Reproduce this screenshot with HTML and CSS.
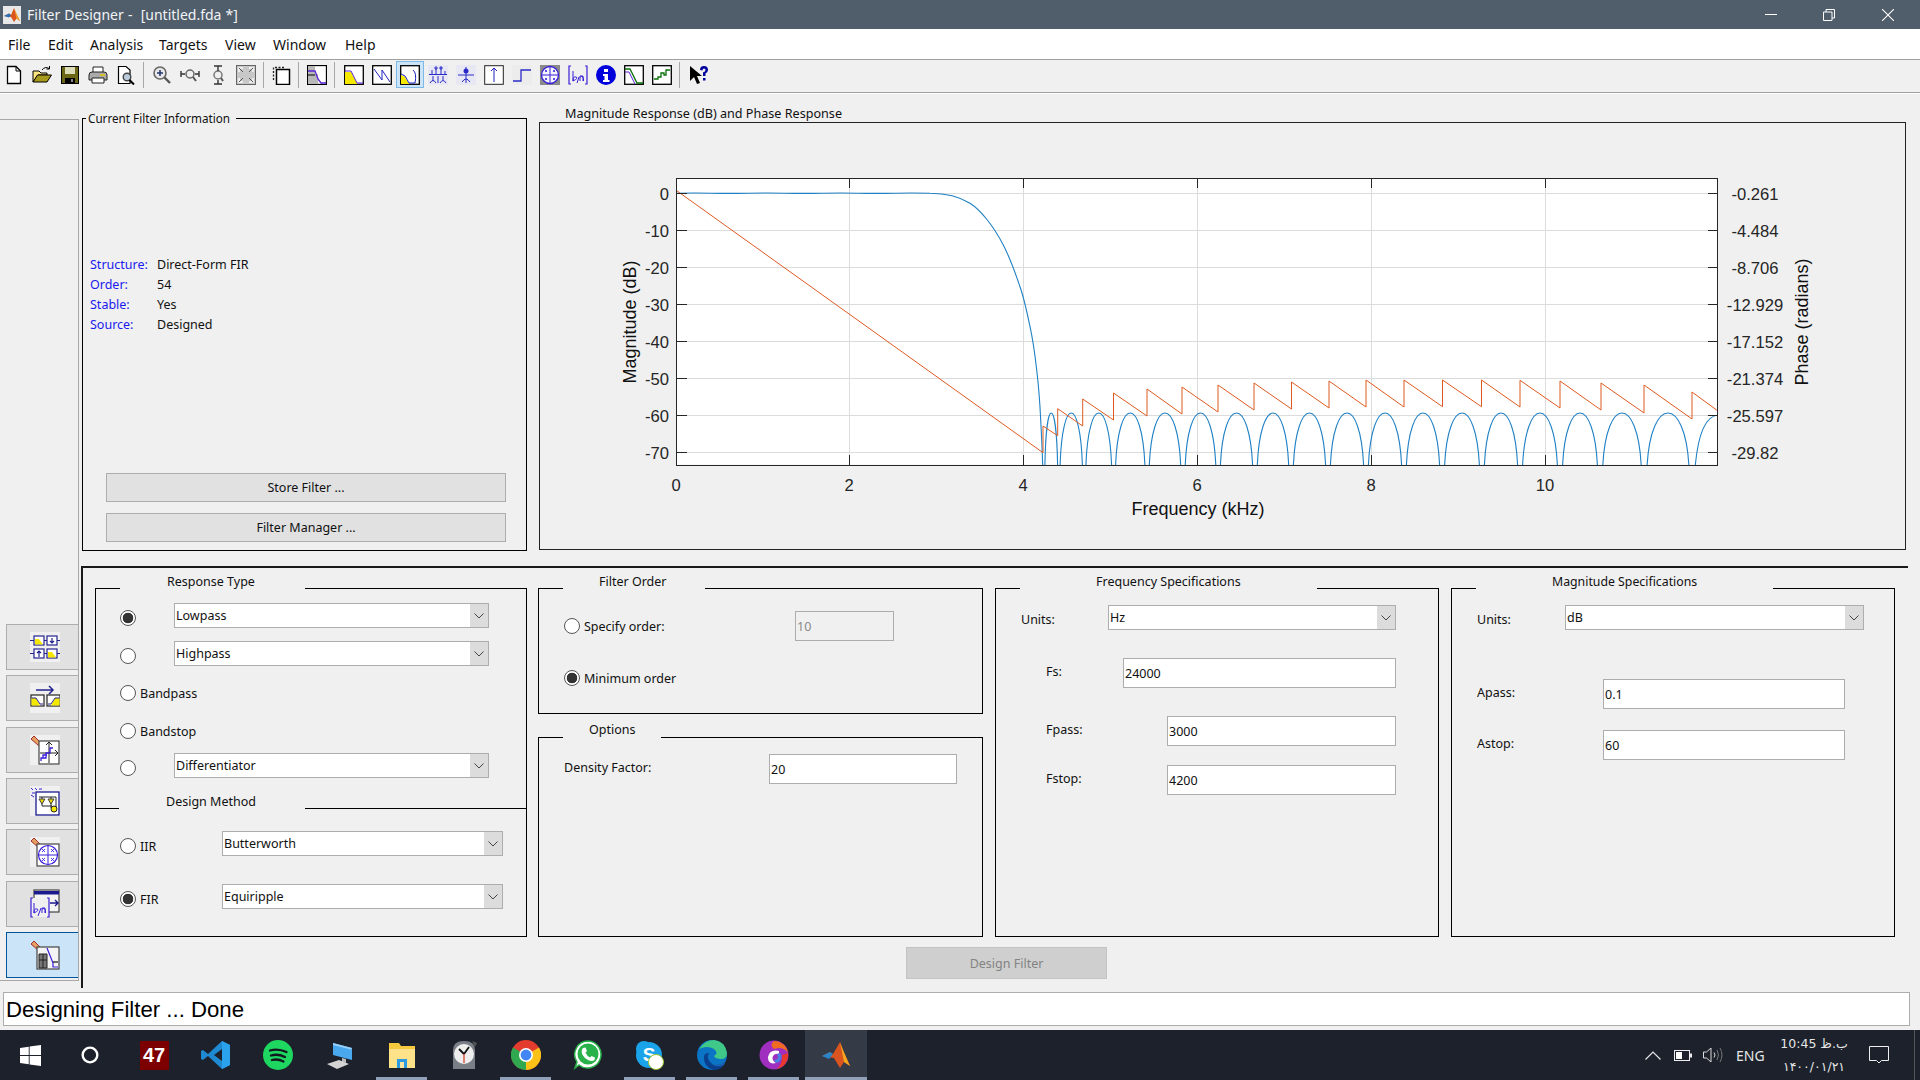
FILE: index.html
```html
<!DOCTYPE html>
<html lang="en">
<head>
<meta charset="utf-8">
<title>Filter Designer - [untitled.fda *]</title>
<link rel="stylesheet" href="styles.css">
</head>
<body>
<div class="app">
  <header class="titlebar">
    <svg class="title-icon" viewBox="0 0 18 18"><rect width="18" height="18" fill="#e8e8e8"/><path d="M1 10L6 7.5 8 9 11 2 13 7 17 15 13.500 12.500 11 16 8 11Z" fill="#d9541e"/><path d="M1 10L6 7.500 8 9 6 11.500Z" fill="#2a6fb5"/><path d="M11 2L13 7 17 15 13.500 12.500Z" fill="#f0a020"/></svg>
    <span class="title-text">Filter Designer -  [untitled.fda *]</span>
    <div class="win-controls">
      <svg viewBox="0 0 12 12"><path d="M0 5.500H12" stroke="#fff"/></svg>
      <svg viewBox="0 0 12 12"><path d="M0.500 3H9V11.500H0.500Z M3 3V0.500H11.500V9H9" fill="none" stroke="#fff"/></svg>
      <svg viewBox="0 0 12 12"><path d="M0 0L12 12M12 0L0 12" stroke="#fff" stroke-width="1.100"/></svg>
    </div>
  </header>

  <nav class="menubar">
    <span>File</span><span>Edit</span><span>Analysis</span><span>Targets</span><span>View</span><span>Window</span><span>Help</span>
  </nav>

  <div class="toolbar">
    <span class="tb"><svg viewBox="0 0 20 20"><path d="M3.500 1.500H12L16.500 6V18.500H3.500Z" fill="#fff" stroke="#000" stroke-width="1.300"/><path d="M12 1.500V6H16.500" fill="none" stroke="#000"/></svg></span>
    <span class="tb"><svg viewBox="0 0 20 20"><path d="M1 17V6H7L9 8H15V10H6L1 17Z" fill="#ffe680" stroke="#000"/><path d="M1 17L5.500 10H19.500L15 17Z" fill="#a89a1d" stroke="#000"/><path d="M10 5Q13 1 17 3.500M17.500 1V4H14.500" fill="none" stroke="#000"/></svg></span>
    <span class="tb"><svg viewBox="0 0 20 20"><rect x="1.500" y="1.500" width="17" height="17" fill="#6b6716" stroke="#000"/><rect x="5" y="2" width="10" height="7" fill="#dcdcb8"/><rect x="5" y="13" width="10" height="5" fill="#000"/><rect x="11" y="14" width="2" height="3" fill="#888"/></svg></span>
    <span class="tb"><svg viewBox="0 0 20 20"><path d="M5 8V2H15V8Z" fill="#fff" stroke="#222"/><path d="M1 10Q1 7 4 7H16Q19 7 19 10V15H1Z" fill="#aaa" stroke="#222"/><path d="M4 13V18H16V13Z" fill="#fff" stroke="#222"/><path d="M12 10H17" stroke="#e4c400" stroke-width="1.500"/></svg></span>
    <span class="tb"><svg viewBox="0 0 20 20"><path d="M2.500 1.500H10L14 5V18.500H2.500Z" fill="#fff" stroke="#000" stroke-width="1.200"/><circle cx="11" cy="12" r="3.800" fill="#bcd" stroke="#444" stroke-width="1.400"/><path d="M13.500 15L18 19.500" stroke="#000" stroke-width="2"/></svg></span>
    <span class="sep"></span>
    <span class="tb"><svg viewBox="0 0 20 20"><circle cx="8" cy="8" r="6" fill="#e8e8e8" stroke="#666" stroke-width="1.600"/><path d="M5 8H11M8 5V11" stroke="#24336b" stroke-width="1.500"/><path d="M12.500 12.500L18 18" stroke="#555" stroke-width="2.400"/></svg></span>
    <span class="tb"><svg viewBox="0 0 20 20"><circle cx="10" cy="9" r="4" fill="#eee" stroke="#666" stroke-width="1.500"/><path d="M13 12L16 16" stroke="#555" stroke-width="2"/><path d="M1 6V12M1 9H5M19 6V12M19 9H15" stroke="#333" stroke-width="1.400"/></svg></span>
    <span class="tb"><svg viewBox="0 0 20 20"><circle cx="10" cy="10" r="4" fill="#eee" stroke="#777" stroke-width="1.500"/><path d="M13 13L15 16" stroke="#555" stroke-width="2"/><path d="M6 1H14M10 1V6M6 19H14M10 19V15" stroke="#333" stroke-width="1.400"/></svg></span>
    <span class="tb"><svg viewBox="0 0 20 20"><rect x="0.500" y="0.500" width="19" height="19" fill="#c8c8c8" stroke="#666"/><path d="M3 7V3H7M17 7V3H13M3 13V17H7M17 13V17H13" fill="none" stroke="#fafafa" stroke-width="1.500"/><path d="M3 3L7 7M17 3L13 7M3 17L7 13M17 17L13 13" stroke="#555"/></svg></span>
    <span class="sep sep-n"></span>
    <span class="tb"><svg viewBox="0 0 20 20"><path d="M2.500 15V2.500H13" fill="none" stroke="#222" stroke-dasharray="2 1.500" stroke-width="1.300"/><rect x="5.500" y="4.500" width="13" height="15" fill="#fff" stroke="#000" stroke-width="1.500"/></svg></span>
    <span class="sep"></span>
    <span class="tb"><svg viewBox="0 0 20 20"><rect x="0.500" y="0.500" width="19" height="19" fill="#fff" stroke="#000" stroke-width="1.300"/><path d="M1 1H8V9H11V19H1Z" fill="#b8b8b8"/><path d="M1 6H8L11 14L14 18H19" fill="none" stroke="#5a20d8" stroke-width="1.300"/><path d="M1 10H8" stroke="#000"/></svg></span>
    <span class="sep sep-w"></span>
    <span class="tb"><svg viewBox="0 0 20 20"><rect x="0.700" y="0.700" width="18.600" height="18.600" fill="#fff" stroke="#000" stroke-width="1.300"/><path d="M1 7H7L13 18V19H1Z" fill="#f4e800"/><path d="M1 6H7L13 18H19" fill="none" stroke="#5a20d8"/></svg></span>
    <span class="tb"><svg viewBox="0 0 20 20"><rect x="0.700" y="0.700" width="18.600" height="18.600" fill="#fff" stroke="#000" stroke-width="1.300"/><path d="M2 4L10 15V5L18 17" fill="none" stroke="#2020c0"/></svg></span>
    <span class="tb active"><svg viewBox="0 0 20 20"><rect x="0.700" y="0.700" width="18.600" height="18.600" fill="#fff" stroke="#000" stroke-width="1.300"/><path d="M1 10L5 12L9 19H1Z" fill="#f4e800"/><path d="M1 9L5 11L9 18H15Q17 8 13 5" fill="none" stroke="#2020c0"/></svg></span>
    <span class="tb"><svg viewBox="0 0 20 20"><rect width="20" height="20" fill="#e8e8f4"/><path d="M1 9.500H19M4 9V5M8 9V3M13 9V2M17 9V6M5 11V16M10 11V18M15 11V15" stroke="#2a2ac8"/><circle cx="8" cy="3" r="1.200" fill="none" stroke="#2a2ac8"/><circle cx="13" cy="3" r="1.200" fill="none" stroke="#2a2ac8"/><path d="M2 18Q5 13 8 18M12 18Q15 13 18 18" fill="none" stroke="#2a2ac8"/></svg></span>
    <span class="tb"><svg viewBox="0 0 20 20"><rect width="20" height="20" fill="#e8e8f4"/><path d="M2 10H18M10 2V18" stroke="#2a2ac8"/><circle cx="10" cy="6" r="2.500" fill="#2a2ac8"/><path d="M6 17Q10 11 14 17" fill="none" stroke="#2a2ac8"/></svg></span>
    <span class="tb"><svg viewBox="0 0 20 20"><rect x="0.700" y="0.700" width="18.600" height="18.600" fill="#fff" stroke="#222"/><path d="M10 17V3M7 6L10 3L13 6" fill="none" stroke="#2020c0"/></svg></span>
    <span class="tb"><svg viewBox="0 0 20 20"><rect width="20" height="20" fill="#ececec"/><path d="M1 16H9V5H19" fill="none" stroke="#2a2ac8" stroke-width="1.300"/></svg></span>
    <span class="tb"><svg viewBox="0 0 20 20"><rect width="20" height="20" fill="#8a8a8a"/><circle cx="10" cy="10" r="8.500" fill="#f4f4ff" stroke="#3a20d8" stroke-width="1.300"/><path d="M1.500 10H18.500M10 1.500V18.500" stroke="#3a20d8"/><path d="M5 5L7 7M7 5L5 7M13 13L15 15M15 13L13 15M13 5L15 7M15 5L13 7M5 13L7 15M7 13L5 15" stroke="#3a20d8" stroke-width=".8"/></svg></span>
    <span class="tb"><svg viewBox="0 0 20 20"><path d="M3 1H1V19H3M17 1H19V19H17" fill="none" stroke="#3a20d8" stroke-width="1.200"/><path d="M5 6V16M5 16Q5 11 8 12T5 16M12 16V11H15V16M12 12Q16 10 15.500 16" fill="none" stroke="#3a20d8"/><path d="M9 18L11 12" stroke="#3a20d8"/></svg></span>
    <span class="tb"><svg viewBox="0 0 20 20"><circle cx="10" cy="10" r="10" fill="#0000dd"/><rect x="8" y="4" width="4" height="3" fill="#fff"/><path d="M7 9H12V15H13.500V17H7V15H8.500V11H7Z" fill="#fff"/></svg></span>
    <span class="tb"><svg viewBox="0 0 20 20"><rect x="0.700" y="0.700" width="18.600" height="18.600" fill="#fff" stroke="#000" stroke-width="1.300"/><path d="M1 4H6L13 18H19" fill="none" stroke="#087008" stroke-width="1.300"/><path d="M1 7H5L11 19" fill="none" stroke="#5a20d8"/></svg></span>
    <span class="tb"><svg viewBox="0 0 20 20"><rect x="0.700" y="0.700" width="18.600" height="18.600" fill="#fff" stroke="#000" stroke-width="1.300"/><path d="M2 14H6V12H9V8H12V10H14V5H18" fill="none" stroke="#087008" stroke-width="1.300"/></svg></span>
    <span class="sep sep-w"></span>
    <span class="tb"><svg viewBox="0 0 20 20"><path d="M1 1V16L5 12L8 19L11 18L8 11H13Z" fill="#000"/><path d="M11 5Q11 1 15 1Q19 1 19 5Q19 7 16.500 8.500V11H14V7.500Q16.500 6.500 16.500 5Q16.500 3.500 15 3.500Q13.500 3.500 13.500 5.500Z" fill="#0000a0"/><rect x="14" y="13" width="2.500" height="2.500" fill="#0000a0"/></svg></span>
  </div>

  <div class="workspace">
    <aside class="sidebar">
      <button class="side-btn"><svg viewBox="0 0 30 30"><rect width="30" height="30" fill="#f0f0f0"/><g fill="#fff" stroke="#23238e" stroke-width="1.200"><rect x="4" y="4" width="10" height="9"/><rect x="17" y="4" width="10" height="9"/><rect x="4" y="17" width="10" height="9"/><rect x="17" y="17" width="10" height="9"/></g><path d="M5 7L9 7L13 12.500H5ZM18 20L22 20L26 25.500H18Z" fill="#f4e800"/><path d="M22 6V11M20 9L22 11L24 9M9 25V19M7 21L9 19L11 21M0 8.500H4M14 8.500H17M27 8.500H30M0 21.500H4M14 21.500H17M27 21.500H30" fill="none" stroke="#23238e" stroke-width="1.200"/></svg></button>
      <button class="side-btn"><svg viewBox="0 0 30 30"><rect width="30" height="30" fill="#f0f0f0"/><path d="M6 7H22M19 3L23 7L19 11" fill="none" stroke="#23238e" stroke-width="1.500"/><rect x="1" y="12" width="13" height="11" fill="#fff" stroke="#222" stroke-width="1.200"/><rect x="17" y="12" width="13" height="11" fill="#fff" stroke="#222" stroke-width="1.200"/><path d="M1.500 15H6L10 22.500H1.500ZM29.500 15H25L21 22.500H29.500Z" fill="#f4e800"/><path d="M1.500 15H6L10 21H13M29.500 15H25L21 21H18" fill="none" stroke="#23238e"/></svg></button>
      <button class="side-btn"><svg viewBox="0 0 30 30"><rect width="30" height="30" fill="#f0f0f0"/><path d="M1 4L4 1L11 8L13 12L8.500 10.500Z" fill="#e8a060" stroke="#a03030"/><rect x="9" y="6" width="20" height="23" fill="#fff" stroke="#444" stroke-width="1.200"/><path d="M10 18H28M19 7V28" stroke="#222"/><path d="M16 10L19 7L22 10M25 15L28 18L25 21" fill="none" stroke="#222"/><path d="M11 26V23H16V18H20V13H23M13 23V20H17" fill="none" stroke="#3a20d8" stroke-width="1.300"/></svg></button>
      <button class="side-btn"><svg viewBox="0 0 30 30"><rect width="30" height="30" fill="#f0f0f0"/><path d="M1 2L3 4M5 2L7 4M9 3H12M2 7H5M1 9L4 11" stroke="#3a20d8" fill="none"/><rect x="6" y="6" width="23" height="23" fill="#fff" stroke="#1a1a8e" stroke-width="1.300"/><path d="M9 11H26V22M12 11V20H22M21 11V22" fill="none" stroke="#222"/><path d="M9 13H15L12 18ZM18 13H24L21 18Z" fill="#e8d800" stroke="#444"/><circle cx="24" cy="23" r="3" fill="#f4e800" stroke="#222"/></svg></button>
      <button class="side-btn"><svg viewBox="0 0 30 30"><rect width="30" height="30" fill="#f0f0f0"/><path d="M1 4L4 1L11 8L13 12L8.500 10.500Z" fill="#e8a060" stroke="#a03030"/><rect x="7" y="7" width="22" height="22" fill="#fff" stroke="#444" stroke-width="1.200"/><circle cx="18" cy="18" r="9.500" fill="none" stroke="#3a20d8" stroke-width="1.200"/><path d="M8 18H28M18 8V28" stroke="#3a20d8"/><path d="M12 12L15 15M15 12L12 15M21 12L24 15M24 12L21 15M12 21L15 24M15 21L12 24M21 21L24 24M24 21L21 24" stroke="#3a20d8" stroke-width=".9"/></svg></button>
      <button class="side-btn"><svg viewBox="0 0 30 30"><rect x="4" y="1" width="25" height="22" fill="#f4f4f4" stroke="#444" stroke-width="1.200"/><rect x="4" y="2" width="25" height="3.500" fill="#1a1a8e"/><path d="M20 14H28M25 11L28 14L25 17" fill="none" stroke="#1a1a8e" stroke-width="1.400"/><rect x="1" y="9" width="18" height="19" fill="#f0f0f0"/><path d="M3 9H1V28H3M17 9H19V28H17" fill="none" stroke="#3a20d8" stroke-width="1.200"/><path d="M4 14V24M4 24Q4 19 7 20T4 24M12 24V19H15V24M12 20Q16 18 15.500 24M8 27L11 19" fill="none" stroke="#3a20d8"/></svg></button>
      <button class="side-btn active"><svg viewBox="0 0 30 30"><path d="M1 4L4 1L11 8L13 12L8.500 10.500Z" fill="#e8a060" stroke="#a03030"/><rect x="7" y="7" width="22" height="22" fill="#f4f4f4" stroke="#444" stroke-width="1.200"/><path d="M9 14H17V28H9Z" fill="#777" stroke="#222"/><path d="M9 20H17M13 14V28" stroke="#222"/><path d="M17 8L23 23V27H28" fill="none" stroke="#3a20d8" stroke-width="1.200"/><path d="M23 22H28" stroke="#222" stroke-width="1.300"/></svg></button>
    </aside>

    <main class="content">
      <section class="top-row">
        <div class="group info-panel">
          <span class="legend legend-info">Current Filter Information</span>
          <dl class="info-list">
            <div><dt>Structure:</dt><dd>Direct-Form FIR</dd></div>
            <div><dt>Order:</dt><dd>54</dd></div>
            <div><dt>Stable:</dt><dd>Yes</dd></div>
            <div><dt>Source:</dt><dd>Designed</dd></div>
          </dl>
          <div class="info-actions">
            <button class="btn">Store Filter ...</button>
            <button class="btn">Filter Manager ...</button>
          </div>
        </div>

        <div class="group plot-panel">
          <span class="legend legend-plot">Magnitude Response (dB) and Phase Response</span>
          <svg class="plot" viewBox="540 123 1365 425">
            <defs><clipPath id="axes-clip"><rect x="677" y="178" width="1041" height="287"/></clipPath></defs>
            <rect x="676.500" y="178.500" width="1041" height="286" fill="#fff"/>
            <path class="grid" d="M849.500 178V465M1023.500 178V465M1197.500 178V465M1371.500 178V465M1545.500 178V465M677 193.500H1718M677 230.500H1718M677 267.500H1718M677 304.500H1718M677 341.500H1718M677 378.500H1718M677 415.500H1718M677 452.500H1718"/>
            <g clip-path="url(#axes-clip)">
              <path class="curve-mag" d="M677 193.200Q695 192.800 712 193.200T748 193.200T785 193.200T822 193.200T858 193.200T895 193.200T930 193.300C945 193.400 960 197 970 203.300C980 209.600 993 225 1003.300 245C1011 260 1016 275 1020 286.700C1024 298 1027 312 1030 326.700C1033 340 1035 355 1036.700 370C1038.500 385 1040 405 1040.700 420C1041.500 435 1042.200 450 1042.700 465M1044.900 465C1046.200 395.700 1056.300 395.700 1057.600 465M1060.100 465C1062.300 395.700 1080.200 395.700 1082.400 465M1085.900 465C1088.500 395.700 1109 395.700 1111.600 465M1115.600 465C1118.500 395.700 1142 395.700 1144.900 465M1149.300 465C1152.400 395.700 1177.600 395.700 1180.700 465M1185.200 465C1188.300 395.700 1212.700 395.700 1215.800 465M1220.400 465C1223.600 395.700 1249.400 395.700 1252.600 465M1257.300 465C1260.400 395.700 1285.600 395.700 1288.700 465M1293.400 465C1296.600 395.700 1322.400 395.700 1325.600 465M1330.400 465C1333.700 395.700 1360.300 395.700 1363.600 465M1368.400 465C1371.700 395.700 1398.300 395.700 1401.600 465M1406.400 465C1409.700 395.700 1436.300 395.700 1439.600 465M1444.600 465C1448.100 395.700 1475.900 395.700 1479.400 465M1484.400 465C1487.700 395.700 1514.300 395.700 1517.600 465M1522.600 465C1526.100 395.700 1553.900 395.700 1557.400 465M1562.600 465C1566.100 395.700 1593.900 395.700 1597.400 465M1602.800 465C1606.600 395.700 1637.400 395.700 1641.200 465M1647.100 465C1651.300 395.700 1684.700 395.700 1688.900 465M1695.300 465C1698.500 432 1706 416 1718 415"/>
              <path class="curve-phase" d="M676.700 190.700L1043 452.700V426L1057.700 435.700V408.700L1082.700 426V399L1113.500 420V393L1147 416V389L1182 414V387L1218 412V385L1254 410V383L1291.500 409V382L1329 408V381L1366 407V380L1404 407V380L1442.500 406.700V380L1481.500 406.700V380L1520 407V380.300L1560 408V381L1601 410V383L1644 413V385L1692 419V392L1718 411"/>
            </g>
            <path class="ticks" d="M849.500 178V188M1023.500 178V188M1197.500 178V188M1371.500 178V188M1545.500 178V188M849.500 465V455M1023.500 465V455M1197.500 465V455M1371.500 465V455M1545.500 465V455M677 193.500H687M677 230.500H687M677 267.500H687M677 304.500H687M677 341.500H687M677 378.500H687M677 415.500H687M677 452.500H687M1718 193.500H1708M1718 230.500H1708M1718 267.500H1708M1718 304.500H1708M1718 341.500H1708M1718 378.500H1708M1718 415.500H1708M1718 452.500H1708"/>
            <rect class="axes-box" x="676.500" y="178.500" width="1041" height="287"/>
            <g class="tick-y">
              <text x="669" y="200">0</text><text x="669" y="237">-10</text><text x="669" y="274">-20</text><text x="669" y="311">-30</text><text x="669" y="348">-40</text><text x="669" y="385">-50</text><text x="669" y="422">-60</text><text x="669" y="459">-70</text>
            </g>
            <g class="tick-x">
              <text x="676" y="491">0</text><text x="849" y="491">2</text><text x="1023" y="491">4</text><text x="1197" y="491">6</text><text x="1371" y="491">8</text><text x="1545" y="491">10</text>
            </g>
            <g class="tick-x">
              <text x="1755" y="200">-0.261</text><text x="1755" y="237">-4.484</text><text x="1755" y="274">-8.706</text><text x="1755" y="311">-12.929</text><text x="1755" y="348">-17.152</text><text x="1755" y="385">-21.374</text><text x="1755" y="422">-25.597</text><text x="1755" y="459">-29.82</text>
            </g>
            <text class="axis-title" x="1198" y="515">Frequency (kHz)</text>
            <text class="axis-title" transform="translate(636 322) rotate(-90)">Magnitude (dB)</text>
            <text class="axis-title" transform="translate(1808 322) rotate(-90)">Phase (radians)</text>
          </svg>
        </div>
      </section>

      <section class="design-block">
        <div class="design-grid">
          <div class="group response-panel">
            <span class="legend legend-response">Response Type</span>
            <div class="response-rows">
              <label class="opt-row r1"><input class="radio nudge" type="radio" name="resp" checked><span class="select s315"><span>Lowpass</span><i class="arrow"><svg viewBox="0 0 10 6"><path d="M0.500 0.500L5 5L9.500 0.500" fill="none" stroke="#444"/></svg></i></span></label>
              <label class="opt-row r2"><input class="radio nudge" type="radio" name="resp"><span class="select s315"><span>Highpass</span><i class="arrow"><svg viewBox="0 0 10 6"><path d="M0.500 0.500L5 5L9.500 0.500" fill="none" stroke="#444"/></svg></i></span></label>
              <label class="opt-row r3"><input class="radio" type="radio" name="resp"><span class="opt-label">Bandpass</span></label>
              <label class="opt-row r4"><input class="radio" type="radio" name="resp"><span class="opt-label">Bandstop</span></label>
              <label class="opt-row r5"><input class="radio nudge" type="radio" name="resp"><span class="select s315"><span>Differentiator</span><i class="arrow"><svg viewBox="0 0 10 6"><path d="M0.500 0.500L5 5L9.500 0.500" fill="none" stroke="#444"/></svg></i></span></label>
            </div>
            <div class="method">
              <span class="legend legend-method">Design Method</span>
              <label class="opt-row"><input class="radio nudge" type="radio" name="method"><span class="opt-label method-label nudge">IIR</span><span class="select s281"><span>Butterworth</span><i class="arrow"><svg viewBox="0 0 10 6"><path d="M0.500 0.500L5 5L9.500 0.500" fill="none" stroke="#444"/></svg></i></span></label>
              <label class="opt-row m2"><input class="radio nudge" type="radio" name="method" checked><span class="opt-label method-label nudge">FIR</span><span class="select s281"><span>Equiripple</span><i class="arrow"><svg viewBox="0 0 10 6"><path d="M0.500 0.500L5 5L9.500 0.500" fill="none" stroke="#444"/></svg></i></span></label>
            </div>
          </div>

          <div class="middle-col">
            <div class="group order-panel">
              <span class="legend legend-order">Filter Order</span>
              <label class="opt-row order-row"><input class="radio" type="radio" name="order"><span class="opt-label order-label">Specify order:</span><input class="field f99" type="text" value="10" disabled></label>
              <label class="opt-row order-row o2"><input class="radio" type="radio" name="order" checked><span class="opt-label order-label">Minimum order</span></label>
            </div>
            <div class="group options-panel">
              <span class="legend legend-options">Options</span>
              <div class="density-row"><span class="lift">Density Factor:</span><input class="field f188" type="text" value="20"></div>
            </div>
          </div>

          <div class="group spec-panel freq-panel">
            <span class="legend legend-freq">Frequency Specifications</span>
            <div class="spec-row"><span class="drop">Units:</span><span class="select s288"><span>Hz</span><i class="arrow"><svg viewBox="0 0 10 6"><path d="M0.500 0.500L5 5L9.500 0.500" fill="none" stroke="#444"/></svg></i></span></div>
            <div class="spec-row sr-fs"><span class="indent lift">Fs:</span><input class="field f273" type="text" value="24000"></div>
            <div class="spec-row sr-fs"><span class="indent lift">Fpass:</span><input class="field f229" type="text" value="3000"></div>
            <div class="spec-row sr-stop"><span class="indent lift">Fstop:</span><input class="field f229" type="text" value="4200"></div>
          </div>

          <div class="group spec-panel mag-panel">
            <span class="legend legend-mag">Magnitude Specifications</span>
            <div class="spec-row"><span class="drop">Units:</span><span class="select s299"><span>dB</span><i class="arrow"><svg viewBox="0 0 10 6"><path d="M0.500 0.500L5 5L9.500 0.500" fill="none" stroke="#444"/></svg></i></span></div>
            <div class="spec-row sr-apass"><span class="lift">Apass:</span><input class="field f242" type="text" value="0.1"></div>
            <div class="spec-row sr-astop"><span class="lift">Astop:</span><input class="field f242" type="text" value="60"></div>
          </div>
        </div>
        <button class="btn design-btn" disabled>Design Filter</button>
      </section>
    </main>
  </div>

  <div class="status">Designing Filter ... Done</div>

  <footer class="taskbar">
    <span class="task start"><svg viewBox="0 0 24 24" width="21" height="21"><path d="M0 3.500L10 2V11.500H0ZM11 1.800L24 0V11.500H11ZM0 12.500H10V22L0 20.500ZM11 12.500H24V24L11 22.200Z" fill="#fff"/></svg></span>
    <span class="task search"><svg viewBox="0 0 24 24" width="22" height="22"><circle cx="12" cy="12" r="8" fill="none" stroke="#fff" stroke-width="2.600"/></svg></span>
    <span class="task"><span class="badge47">47</span></span>
    <span class="task"><svg viewBox="0 0 30 30"><path d="M21 1L29 5V25L21 29L7 16L2 20L0 19V11L2 10L7 14ZM21 9L13 15L21 21Z" fill="#1f8ad2"/><path d="M21 1L29 5V25L21 29Z" fill="#2aa2ec"/></svg></span>
    <span class="task"><svg viewBox="0 0 30 30"><circle cx="15" cy="15" r="15" fill="#1ed760"/><path d="M7 10.500Q15 8 23.500 12M8 15.500Q15 13.500 22 17M9 20Q15 18.500 20.500 21.500" fill="none" stroke="#12181f" stroke-width="2.300" stroke-linecap="round"/></svg></span>
    <span class="task"><svg viewBox="0 0 30 30"><path d="M8 3L27 8V20L8 15Z" fill="#4aa8ee"/><path d="M8 3L27 8L26 9.500L8 5Z" fill="#9ad0f5"/><path d="M17 18V22L21 23V19Z" fill="#bbb"/><path d="M2 24L14 20L24 24L12 29Z" fill="#d4d4d4"/></svg></span>
    <span class="task open"><svg viewBox="0 0 30 30"><path d="M2 3H12L14 6H28V28H2Z" fill="#f7c93e"/><rect x="2" y="9" width="26" height="19" fill="#fde28a"/><path d="M10 28V19H20V28H17V22H13V28Z" fill="#2c9ae0"/><rect x="13" y="22" width="4" height="6" fill="#f7e4a0"/></svg></span>
    <span class="task"><svg viewBox="0 0 30 30"><path d="M4 10Q4 1 15 1Q26 1 26 10V29H4Z" fill="#7a7f87"/><path d="M23 1L28 3L26 7Z" fill="#555"/><circle cx="15" cy="14" r="10" fill="#eee"/><path d="M15 14L10 9M15 14L20 7" stroke="#111" stroke-width="1.800"/><path d="M15 14V23" stroke="#d8341c" stroke-width="1.200"/></svg></span>
    <span class="task open"><svg viewBox="0 0 30 30"><circle cx="15" cy="15" r="15" fill="#e33b2e"/><path d="M15 15L28 7.500A15 15 0 0 1 15 30Z" fill="#fbc116"/><path d="M15 15V30A15 15 0 0 1 2 7.500Z" fill="#2fa84f"/><circle cx="15" cy="15" r="7" fill="#fff"/><circle cx="15" cy="15" r="5.400" fill="#4286f5"/></svg></span>
    <span class="task"><svg viewBox="0 0 30 30"><path d="M15 1A13.500 13.500 0 1 1 6 25L2 28L4 22A13.500 13.500 0 0 1 15 1Z" fill="#fff" stroke="#2ab24a" stroke-width="1.500"/><circle cx="15" cy="14" r="10.500" fill="#2ab24a"/><path d="M10 8L12.500 7.500L14 11L12.500 12.500Q14 16 17 17.500L18.500 16L22 17.500L21.500 20Q19 22 15 20Q11 18 9 14Q8 10 10 8Z" fill="#fff"/></svg></span>
    <span class="task open"><svg viewBox="0 0 30 30"><circle cx="9" cy="9" r="8" fill="#1aa3e8"/><circle cx="14" cy="15" r="13" fill="#1aa3e8"/><text class="skype-s" x="14" y="21">S</text><circle cx="21" cy="22" r="7.500" fill="#fff" stroke="#9bc32d"/></svg></span>
    <span class="task open"><svg viewBox="0 0 30 30"><circle cx="15" cy="15" r="15" fill="#0c74c4"/><path d="M2 9Q8 0 17 0Q28 1 30 13Q30 19 24 19Q18 19 17 16Q22 13 17 9Q10 5 2 9Z" fill="#3fc887"/><path d="M7 16Q6 26 16 30Q24 30 27 25Q18 28 14 23Q9 18 12 13Q8 13 7 16Z" fill="#0a3f8e"/><path d="M27 25Q20 28 16 24Q25 26 29 20Z" fill="#1a5fb0"/></svg></span>
    <span class="task open"><svg viewBox="0 0 30 30"><circle cx="15" cy="15" r="14.500" fill="#a02fc0"/><path d="M15 1A14 14 0 0 1 29 13Q24 6 15 9Q10 5 15 1Z" fill="#f06a22"/><path d="M29 13A14 14 0 0 1 17 29Q24 25 23 15Q26 14 29 13Z" fill="#e8382e"/><path d="M20 11Q11 9 9 17Q9 25 17 23Q12 20 14 16Q16 13 20 14Z" fill="#fff"/><path d="M17 23Q24 22 22 14Q19 12 18 15Q21 19 15 20Z" fill="#4a80e0"/></svg></span>
    <span class="task active"><svg viewBox="0 0 30 30"><path d="M1 16L9 12L12 14L19 2L22 10L29 26L23 22L19 28L13 18Z" fill="#d9541e"/><path d="M1 16L9 12L12 14L8 19Z" fill="#2a85c8"/><path d="M19 2L22 10L29 26L23 22Z" fill="#f3a51e"/></svg></span>
    <div class="tray">
      <svg class="tray-chev" viewBox="0 0 16 9"><path d="M0.500 8.500L8 1L15.500 8.500" fill="none" stroke="#e6e6e6" stroke-width="1.200"/></svg>
      <svg class="tray-batt" viewBox="0 0 18 11"><rect x="0.500" y="0.500" width="15" height="10" fill="none" stroke="#eee"/><rect x="2" y="2" width="6" height="7" fill="#fff"/><rect x="16" y="3.500" width="2" height="4" fill="#eee"/></svg>
      <svg class="tray-vol" viewBox="0 0 20 16"><path d="M0.500 5H3.500L8 1V15L3.500 11H0.500Z" fill="none" stroke="#ddd"/><path d="M11 5.500Q13 8 11 10.500" fill="none" stroke="#ddd"/><path d="M14 3Q17 8 14 13M17 1Q21 8 17 15" fill="none" stroke="#777"/></svg>
      <span class="tray-lang">ENG</span>
      <span class="tray-clock"><span>10:45 ب.ظ</span><span>۱۴۰۰/۰۱/۲۱</span></span>
      <svg class="tray-note" viewBox="0 0 20 18"><path d="M0.500 0.500H19.500V14.500H12.500L10 17L7.500 14.500H0.500Z" fill="none" stroke="#eee"/></svg>
    </div>
  </footer>
</div>
</body>
</html>
```

FILE: styles.css
```css
* { box-sizing: border-box; }

html, body {
  margin: 0;
  padding: 0;
  background: #f0f0f0;
}

body {
  font-family: "Noto Sans", "Liberation Sans", sans-serif;
  font-size: 12.5px;
  color: #111;
  overflow: hidden;
}

.app {
  width: 1920px;
  height: 1080px;
  display: flex;
  flex-direction: column;
  background: #f0f0f0;
}

/* Title bar */
.titlebar {
  height: 29px;
  background: #505d6b;
  color: #fff;
  display: flex;
  align-items: center;
  padding-left: 3px;
  flex: none;
}
.title-icon { width: 18px; height: 18px; }
.title-text { margin-left: 6px; font-size: 14px; white-space: pre; word-spacing: 0.500px; color: #f2f4f6; }
.win-controls {
  margin-left: auto;
  display: flex;
  gap: 46px;
  padding-right: 26px;
}
.win-controls svg { width: 12px; height: 12px; display: block; }
.win-controls svg:last-child { margin-left: 1px; }

/* Menu */
.menubar {
  height: 30px;
  background: #fff;
  display: flex;
  align-items: center;
  padding-left: 8px;
  font-size: 14px;
  flex: none;
}
.menubar span:nth-child(1) { width: 40px; }
.menubar span:nth-child(2) { width: 42px; }
.menubar span:nth-child(3) { width: 69px; }
.menubar span:nth-child(4) { width: 66px; }
.menubar span:nth-child(5) { width: 48px; }
.menubar span:nth-child(6) { width: 72px; }

/* Toolbar */
.toolbar {
  height: 34px;
  flex: none;
  display: flex;
  align-items: center;
  padding-bottom: 3px;
  background: #f0f0f0;
  border-top: 1px solid #a0a0a0;
  border-bottom: 1px solid #a0a0a0;
  box-shadow: 0 1px 0 #fff;
}
.tb {
  width: 28px;
  height: 27px;
  flex: none;
  display: flex;
  align-items: center;
  justify-content: center;
}
.tb svg { width: 20px; height: 20px; display: block; }
.tb.active { background: #cce4f7; border: 1px solid #7db9e8; }
.sep {
  width: 1px;
  height: 26px;
  flex: none;
  background: #a8a8a8;
  margin: 0 4px 0 3px;
}
.sep-n { margin: 0 3px; }
.sep-w { margin: 0 5px 0 3px; }

/* Workspace */
.workspace {
  height: 899px;
  flex: none;
  display: flex;
}
.sidebar {
  width: 79px;
  height: 862px;
  margin-top: 26px;
  flex: none;
  display: flex;
  flex-direction: column;
  justify-content: flex-end;
  gap: 5.330px;
  padding: 0 0 2px 6px;
  border-top: 1px solid #a8a8a8;
  border-right: 1px solid #a8a8a8;
  border-bottom: 1px solid #a8a8a8;
}
.side-btn {
  height: 46px;
  width: 72px;
  padding: 0 0 0 4px;
  flex: none;
  display: flex;
  align-items: center;
  justify-content: center;
  background: #e1e1e1;
  border: 1px solid #adadad;
  border-right: 0;
}
.side-btn svg { width: 30px; height: 30px; display: block; }
.side-btn.active { background: #cce4f7; border: 1px solid #005499; border-right: 0; }

.content {
  flex: 1;
  min-width: 0;
  display: flex;
  flex-direction: column;
}

/* Framed groups */
.group {
  position: relative;
  border: 1px solid #000;
  background: #f0f0f0;
}
.legend {
  position: absolute;
  background: #f0f0f0;
  white-space: nowrap;
  line-height: 16px;
}

/* Top row */
.top-row {
  height: 473px;
  flex: none;
  display: flex;
  align-items: flex-start;
  padding-left: 3px;
}
.info-panel {
  width: 445px;
  height: 433px;
  margin-top: 25px;
  display: flex;
  flex-direction: column;
  padding: 135px 0 8px 7px;
}
.legend-info { top: -9px; left: 3px; padding: 0 6px 0 2px; font-size: 11.700px; }
.info-list { margin: 0; }
.info-list div { display: flex; height: 20px; align-items: center; }
.info-list dt { width: 67px; color: #1a1aee; }
.info-list dd { margin: 0; }
.info-actions {
  margin-top: auto;
  display: flex;
  flex-direction: column;
  gap: 11px;
  padding-left: 16px;
}
.btn {
  width: 400px;
  height: 29px;
  padding: 0;
  background: #e1e1e1;
  border: 1px solid #adadad;
  font: inherit;
  color: #111;
}

.plot-panel {
  width: 1367px;
  height: 428px;
  margin: 29px 0 0 12px;
  border-color: #222;
}
.legend-plot { top: -17px; left: 23px; padding: 0 2px; font-size: 12.600px; }
.plot { display: block; width: 1365px; height: 425px; }
.grid { stroke: #dcdcdc; stroke-width: 1; fill: none; }
.ticks { stroke: #262626; stroke-width: 1; fill: none; }
.axes-box { fill: none; stroke: #262626; stroke-width: 1; }
.curve-mag { fill: none; stroke: #1f80c4; stroke-width: 1.100; }
.curve-phase { fill: none; stroke: #de5a20; stroke-width: 1; }
.tick-y, .tick-x {
  font-family: "Liberation Sans", Arial, sans-serif;
  font-size: 16.600px;
  fill: #262626;
}
.tick-y { text-anchor: end; }
.tick-x { text-anchor: middle; }
.axis-title {
  font-family: "Liberation Sans", Arial, sans-serif;
  font-size: 18px;
  fill: #111;
  text-anchor: middle;
}

/* Design block */
.design-block {
  width: 1827px;
  height: 422px;
  margin-left: 2px;
  flex: none;
  border-top: 2px solid #1a1a1a;
  border-left: 2px solid #1a1a1a;
  padding: 20px 0 0 12px;
}
.design-grid {
  display: grid;
  grid-template-columns: 432px 445px 446px 444px;
  column-gap: 11px;
  height: 349px;
}
.design-btn {
  display: block;
  width: 201px;
  height: 32px;
  margin: 10px 0 0 811px;
  background: #cfcfcf;
  border-color: #c4c4c4;
  color: #838383;
}

.legend-response { top: -15px; left: 24px; padding: 0 50px 0 47px; }
.legend-method { top: -15px; left: 23px; padding: 0 49px 0 47px; }
.legend-order { top: -15px; left: 24px; padding: 0 38px 0 36px; }
.legend-options { top: -16px; left: 24px; padding: 0 26px 0 26px; }
.legend-freq { top: -15px; left: 24px; padding: 0 76px 0 76px; font-size: 12.500px; }
.legend-mag { top: -15px; left: 24px; padding: 0 76px 0 76px; font-size: 12.300px; }

.response-panel { display: flex; flex-direction: column; }
.response-rows { padding: 14px 0 0 24px; height: 219px; }
.opt-row { display: flex; align-items: center; height: 25px; }
.r2 { margin-top: 13px; }
.r3 { margin-top: 14.500px; }
.r4 { margin-top: 13px; }
.r5 { margin-top: 9.500px; }

.radio {
  appearance: none;
  width: 16px;
  height: 16px;
  margin: 0;
  flex: none;
  border-radius: 50%;
  border: 1.200px solid #555;
  background: #fff;
}
.radio:checked { background: radial-gradient(circle, #333 0 5px, #fff 5.600px); }
.nudge { margin-top: 5px; }

.opt-label { margin-left: 4px; }
.r1 .select, .r2 .select, .r5 .select { margin-left: 38px; }

.select {
  display: flex;
  height: 25px;
  align-items: center;
  justify-content: space-between;
  background: #fff;
  border: 1px solid #adadad;
  padding-left: 1px;
  flex: none;
}
.arrow {
  width: 18px;
  height: 23px;
  background: #dcdcdc;
  display: flex;
  align-items: center;
  justify-content: center;
}
.arrow svg { width: 10px; height: 6px; display: block; }
.s315 { width: 315px; }
.s281 { width: 281px; }
.s288 { width: 288px; }
.s299 { width: 299px; }

.method {
  position: relative;
  flex: 1;
  border-top: 1px solid #000;
  padding: 22px 0 0 24px;
}
.method-label { width: 82px; }
.m2 { margin-top: 28px; }

.middle-col { display: flex; flex-direction: column; height: 349px; }
.order-panel { height: 126px; padding: 22px 0 0 25px; }
.order-row { height: 30px; }
.o2 { margin-top: 22px; }
.order-label { width: 211px; flex: none; }

.options-panel { flex: 1; margin-top: 23px; padding: 16px 0 0 25px; }
.density-row { display: flex; align-items: center; }
.density-row span { width: 205px; flex: none; }

.field {
  height: 30px;
  border: 1px solid #adadad;
  background: #fff;
  padding: 0 1px;
  font: inherit;
  color: #111;
  flex: none;
  outline: none;
  border-radius: 0;
}
.field:disabled { background: #f0f0f0; color: #8a8a8a; }
.f99 { width: 99px; }
.f188 { width: 188px; }
.f273 { width: 273px; }
.f229 { width: 229px; }
.f242 { width: 242px; }

.lift { margin-bottom: 4px; }
.drop { margin-top: 3px; }
.indent { padding-left: 25px; }

.spec-panel { padding-top: 16px; }
.freq-panel { margin: 0 1px; }
.spec-row {
  display: flex;
  align-items: center;
  justify-content: space-between;
  padding-left: 25px;
}
.freq-panel .spec-row { padding-right: 42px; }
.mag-panel .spec-row { padding-right: 30px; }
.sr-fs { margin-top: 28px; }
.sr-stop { margin-top: 19px; }
.mag-panel .sr-apass { margin-top: 49px; padding-right: 49px; }
.mag-panel .sr-astop { margin-top: 21px; padding-right: 49px; }

/* Status */
.status {
  width: 1907px;
  height: 34px;
  margin: 0 0 4px 3px;
  flex: none;
  background: #fff;
  border: 1px solid #adadad;
  padding-left: 2px;
  font-family: "Liberation Sans", Arial, sans-serif;
  font-size: 22.200px;
  line-height: 34px;
  color: #000;
}

/* Taskbar */
.taskbar {
  height: 50px;
  flex: none;
  display: flex;
  background: #1c212b;
}
.task {
  position: relative;
  width: 62px;
  height: 50px;
  flex: none;
  display: flex;
  align-items: center;
  justify-content: center;
}
.task > svg:not([width]) { width: 30px; height: 30px; display: block; }
.task.start { width: 60px; }
.task.search { width: 60px; margin-right: 3px; }
.task.open::after, .task.active::after {
  content: "";
  position: absolute;
  bottom: 0;
  height: 3px;
  background: #8fa0b8;
}
.task.open::after { left: 5px; width: 51px; }
.task.active { background: #343a46; }
.task.active::after { left: 0; width: 100%; }
.badge47 {
  width: 29px;
  height: 29px;
  background: #7d0000;
  color: #fff;
  font-family: "Liberation Sans", Arial, sans-serif;
  font-weight: 700;
  font-size: 20px;
  line-height: 29px;
  text-align: center;
}
.skype-s {
  font-family: "Liberation Sans", Arial, sans-serif;
  font-weight: 700;
  font-size: 19px;
  fill: #fff;
  text-anchor: middle;
}

.tray {
  margin-left: auto;
  display: flex;
  align-items: center;
  padding-right: 5px;
  color: #e6e6e6;
  position: relative;
}
.tray::after {
  content: "";
  position: absolute;
  right: 5px;
  top: 0;
  bottom: 0;
  width: 1px;
  background: #555;
}
.tray svg { display: block; flex: none; }
.tray-chev { width: 16px; height: 9px; }
.tray-batt { width: 18px; height: 11px; margin-left: 13px; }
.tray-vol { width: 20px; height: 16px; margin-left: 11px; }
.tray-lang { width: 29px; margin-left: 13px; font-size: 14px; }
.tray-clock {
  width: 68px;
  margin-left: 15px;
  display: flex;
  flex-direction: column;
  align-items: center;
  gap: 5px;
  font-family: "DejaVu Sans", sans-serif;
  font-size: 12.500px;
  line-height: 18px;
  white-space: nowrap;
}
.tray-note { width: 20px; height: 18px; margin: 0 26px 0 21px; }
```
